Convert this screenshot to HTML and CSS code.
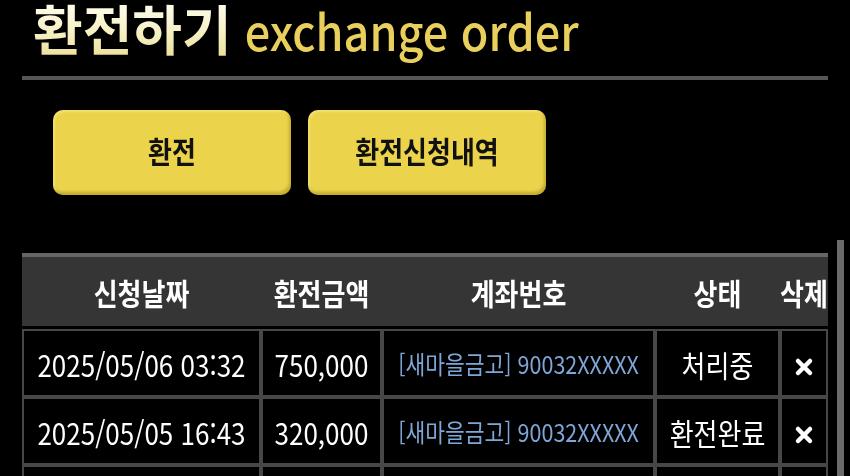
FILE: index.html
```html
<!DOCTYPE html>
<html lang="ko">
<head>
<meta charset="utf-8">
<title>환전하기</title>
<link rel="stylesheet" href="styles.css">
</head>
<body>
<div class="page">
  <h1 class="title"><span class="title-ko">환전하기</span><span class="title-en">exchange order</span></h1>
  <div class="rule"></div>
  <div class="tabs">
    <button class="tab"><span class="tx">환전</span></button>
    <button class="tab"><span class="tx">환전신청내역</span></button>
  </div>
  <div class="list-area">
    <div class="table-wrap">
      <table class="history">
        <colgroup>
          <col class="c-date"><col class="c-amount"><col class="c-account"><col class="c-status"><col class="c-del">
        </colgroup>
        <thead>
          <tr>
            <th><span class="tx">신청날짜</span></th>
            <th><span class="tx">환전금액</span></th>
            <th><span class="tx">계좌번호</span></th>
            <th><span class="tx">상태</span></th>
            <th><span class="tx">삭제</span></th>
          </tr>
        </thead>
        <tbody>
          <tr>
            <td><span class="tx">2025/05/06 03:32</span></td>
            <td><span class="tx">750,000</span></td>
            <td class="account"><span class="tx">[새마을금고] 90032XXXXX</span></td>
            <td><span class="tx">처리중</span></td>
            <td><svg class="del" viewBox="0 0 20 20"><path d="M4 4L16 16M16 4L4 16"/></svg></td>
          </tr>
          <tr>
            <td><span class="tx">2025/05/05 16:43</span></td>
            <td><span class="tx">320,000</span></td>
            <td class="account"><span class="tx">[새마을금고] 90032XXXXX</span></td>
            <td><span class="tx">환전완료</span></td>
            <td><svg class="del" viewBox="0 0 20 20"><path d="M4 4L16 16M16 4L4 16"/></svg></td>
          </tr>
          <tr>
            <td><span class="tx">2025/05/04 11:20</span></td>
            <td><span class="tx">500,000</span></td>
            <td class="account"><span class="tx">[새마을금고] 90032XXXXX</span></td>
            <td><span class="tx">환전완료</span></td>
            <td><svg class="del" viewBox="0 0 20 20"><path d="M4 4L16 16M16 4L4 16"/></svg></td>
          </tr>
        </tbody>
      </table>
    </div>
    <div class="scroll-bar"></div>
  </div>
</div>
</body>
</html>
```

FILE: styles.css
```css
* { box-sizing: border-box; }
html, body {
  margin: 0;
  padding: 0;
  background: #000;
  height: 100%;
  overflow: hidden;
}
body {
  font-family: "Noto Sans CJK KR", "Noto Sans", sans-serif;
  color: #fff;
}
.page {
  display: flex;
  flex-direction: column;
}
.tx {
  display: inline-block;
  transform: scaleY(1.15);
}
.title {
  margin: 0;
  padding-left: 33px;
  height: 60px;
  display: flex;
  align-items: baseline;
  gap: 13px;
  font-weight: 500;
  white-space: nowrap;
}
.title-ko {
  display: inline-block;
  font-size: 54px;
  font-weight: 700;
  line-height: 56px;
  background: linear-gradient(180deg, #fffdf0 0%, #f7f1c6 55%, #ede19c 100%);
  -webkit-background-clip: text;
  background-clip: text;
  color: transparent;
}
.title-en {
  display: inline-block;
  font-size: 45px;
  line-height: 60px;
  transform-origin: 50% 49.6px;
  transform: scaleY(1.1);
  color: #e9d05c;
  font-weight: 500;
}
.rule {
  margin: 16px 0 0 22px;
  width: 806px;
  height: 4px;
  background: #565656;
}
.tabs {
  display: flex;
  gap: 17px;
  padding-left: 53px;
  margin-top: 30px;
}
.tab {
  width: 238px;
  height: 85px;
  border: none;
  border-radius: 10px;
  background: #ebd34b;
  box-shadow: inset -2px -3px 3px rgba(120, 100, 0, 0.35), inset 2px 2px 2px rgba(255, 245, 160, 0.4);
  font-family: "Noto Sans CJK KR", sans-serif;
  font-size: 26px;
  font-weight: 700;
  color: #111;
  padding: 0 0 6px;
  cursor: pointer;
}
.list-area {
  display: flex;
  margin-top: 45px;
}
.table-wrap {
  margin-left: 22px;
  width: 806px;
  padding-top: 13px;
}
.scroll-bar {
  margin-left: 9px;
  width: 7px;
  height: 300px;
  background: #6b6b6b;
}
.history {
  width: 806px;
  table-layout: fixed;
  border-collapse: separate;
  border-spacing: 0;
}
.c-date { width: 239px; }
.c-amount { width: 121px; }
.c-account { width: 273px; }
.c-status { width: 125px; }
.c-del { width: 48px; }
.history th {
  height: 76px;
  padding: 0;
  background: #353535;
  border-top: 4px solid #666;
  border-bottom: 3px solid #000;
  font-size: 26px;
  font-weight: 700;
  color: #fff;
  white-space: nowrap;
  text-align: center;
}
.history td {
  height: 68px;
  padding: 0;
  border: 2px solid #474747;
  text-align: center;
  font-size: 26px;
  color: #fff;
  white-space: nowrap;
}
.history td.account {
  color: #7ea6d6;
  font-size: 21.5px;
}
.del {
  width: 20px;
  height: 20px;
  vertical-align: middle;
}
.del path {
  stroke: #fff;
  stroke-width: 4.5;
  stroke-linecap: round;
  fill: none;
}
```
